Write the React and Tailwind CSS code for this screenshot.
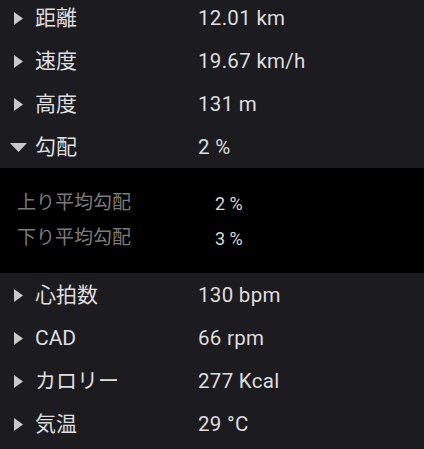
import React, { useState } from 'react';

const font = { fontFamily: '"Roboto", "Noto Sans CJK JP", sans-serif' };

const rowsTop = [
  { label: '距離', value: '12.01 km' },
  { label: '速度', value: '19.67 km/h' },
  { label: '高度', value: '131 m' },
  { label: '勾配', value: '2 %', open: true },
];

const rowsBottom = [
  { label: '心拍数', value: '130 bpm' },
  { label: 'CAD', value: '66 rpm' },
  { label: 'カロリー', value: '277 Kcal' },
  { label: '気温', value: '29 °C' },
];

function Row({ label, value, open }) {
  return (
    <div className="flex items-center h-[43px]">
      <div className={`w-[35px] flex items-center shrink-0 ${open ? 'pl-[10px]' : 'pl-[14px]'}`}>
        {open ? (
          <svg width="17" height="9" viewBox="0 0 17 9">
            <polygon points="0,0 17,0 8.5,9" fill="#c8c8c8" />
          </svg>
        ) : (
          <svg width="9" height="13" viewBox="0 0 9 13">
            <polygon points="0,0 9,6.5 0,13" fill="#c8c8c8" />
          </svg>
        )}
      </div>
      <div className="w-[163px] text-[21px] text-[#dedede]">{label}</div>
      <div className="text-[20.5px] tracking-[0.3px] text-[#dedede]">{value}</div>
    </div>
  );
}

export default function App() {
  const [rows] = useState(rowsTop);

  return (
    <div className="w-[424px] h-[449px] bg-[#1c1b20] overflow-hidden" style={font}>
      <div className="-mt-[3px]">
        {rows.map((r) => (
          <Row key={r.label} {...r} />
        ))}
      </div>
      <div className="bg-black h-[105px] mt-[-1px] pt-[18px]">
        <div className="flex items-center h-[35px]">
          <div className="w-[198px] pl-[17px] text-[19px] text-[#7b7b7b]">上り平均勾配</div>
          <div className="pl-[17px] text-[18px] text-[#dadada]">2 %</div>
        </div>
        <div className="flex items-center h-[35px]">
          <div className="w-[198px] pl-[17px] text-[19px] text-[#7b7b7b]">下り平均勾配</div>
          <div className="pl-[17px] text-[18px] text-[#dadada]">3 %</div>
        </div>
      </div>
      <div className="pt-[1px]">
        {rowsBottom.map((r) => (
          <Row key={r.label} {...r} />
        ))}
      </div>
    </div>
  );
}
